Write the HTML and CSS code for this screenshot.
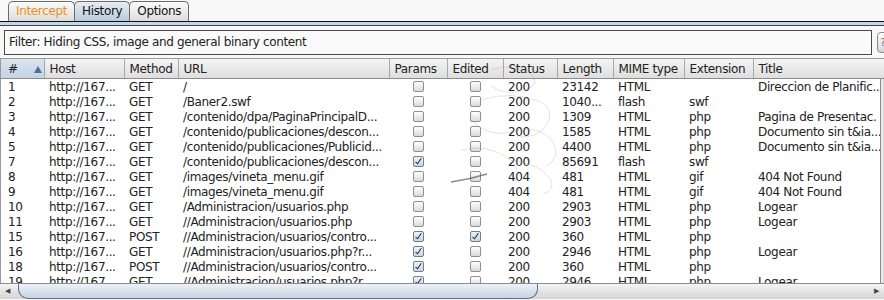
FILE: index.html
```html
<!DOCTYPE html>
<html lang="en">
<head>
  <meta charset="UTF-8">
  <title>Proxy - History</title>
  <link rel="stylesheet" href="styles.css">
</head>
<body>

  <!-- Tabs -->
  <div class="tabs">
    <div class="tab tab-intercept">Intercept</div>
    <div class="tab selected">History</div>
    <div class="tab">Options</div>
  </div>
  <div class="tab-rule"></div>

  <!-- Filter bar -->
  <div class="filter-row">
    <div class="filter-box">Filter: Hiding CSS, image and general binary content</div>
    <div class="help-btn">?</div>
  </div>

  <!-- History table -->
  <div class="table-pane">
    <table class="history">
      <colgroup>
        <col style="width:43px"><col style="width:80px"><col style="width:54px"><col style="width:211px">
        <col style="width:58px"><col style="width:56px"><col style="width:54px"><col style="width:56px">
        <col style="width:71px"><col style="width:69px"><col style="width:131px">
      </colgroup>
      <thead>
        <tr>
          <th class="sorted"># <span class="sort-arrow"></span></th>
          <th>Host</th>
          <th>Method</th>
          <th>URL</th>
          <th>Params</th>
          <th>Edited</th>
          <th>Status</th>
          <th>Length</th>
          <th>MIME type</th>
          <th>Extension</th>
          <th>Title</th>
        </tr>
      </thead>
      <tbody id="rows"></tbody>
    </table>
    <div class="vscroll"></div>

    <svg class="watermark" width="130" height="140" viewBox="0 0 130 140">
      <path d="M40 10 q20 -8 40 4 q10 10 -6 16 q-20 6 -34 -4" />
      <path d="M30 40 q30 -10 60 2 q14 8 6 22 q-10 16 -30 12" />
      <path d="M20 60 q18 18 40 12 q30 -8 42 10 q8 14 -6 24" />
      <path d="M10 90 q24 -6 44 6 q18 10 10 26" />
      <path d="M60 100 q30 4 40 20 q4 10 -8 14" />
      <path d="M-20 124 q30 -2 56 -10" class="dark" />
    </svg>
  </div>

  <!-- Horizontal scrollbar -->
  <div class="hscroll">
    <div class="arrow-btn">&#9664;</div>
    <div class="track">
      <div class="thumb"></div>
    </div>
    <div class="arrow-btn">&#9654;</div>
  </div>

  <script>
    // # method url params edited status length mime ext title
    const history = [
      ['1', 'GET', '/', 0, 0, '200', '23142', 'HTML', '', 'Direccion de Planific..'],
      ['2', 'GET', '/Baner2.swf', 0, 0, '200', '1040...', 'flash', 'swf', ''],
      ['3', 'GET', '/contenido/dpa/PaginaPrincipalD...', 0, 0, '200', '1309', 'HTML', 'php', 'Pagina de Presentac.'],
      ['4', 'GET', '/contenido/publicaciones/descon...', 0, 0, '200', '1585', 'HTML', 'php', 'Documento sin t&ia...'],
      ['5', 'GET', '/contenido/publicaciones/Publicid...', 0, 0, '200', '4400', 'HTML', 'php', 'Documento sin t&ia...'],
      ['7', 'GET', '/contenido/publicaciones/descon...', 1, 0, '200', '85691', 'flash', 'swf', ''],
      ['8', 'GET', '/images/vineta_menu.gif', 0, 0, '404', '481', 'HTML', 'gif', '404 Not Found'],
      ['9', 'GET', '/images/vineta_menu.gif', 0, 0, '404', '481', 'HTML', 'gif', '404 Not Found'],
      ['10', 'GET', '/Administracion/usuarios.php', 0, 0, '200', '2903', 'HTML', 'php', 'Logear'],
      ['11', 'GET', '//Administracion/usuarios.php', 0, 0, '200', '2903', 'HTML', 'php', 'Logear'],
      ['15', 'POST', '//Administracion/usuarios/contro...', 1, 1, '200', '360', 'HTML', 'php', ''],
      ['16', 'GET', '//Administracion/usuarios.php?r...', 1, 0, '200', '2946', 'HTML', 'php', 'Logear'],
      ['18', 'POST', '//Administracion/usuarios/contro...', 1, 0, '200', '360', 'HTML', 'php', ''],
      ['19', 'GET', '//Administracion/usuarios.php?r...', 1, 0, '200', '2946', 'HTML', 'php', 'Logear']
    ];

    function checkbox(on) {
      const box = document.createElement('span');
      box.className = on ? 'cb on' : 'cb';
      return box;
    }

    const body = document.getElementById('rows');
    history.forEach(function (r) {
      const tr = document.createElement('tr');
      const cells = [r[0], 'http://167...', r[1], r[2], null, null, r[5], r[6], r[7], r[8], r[9]];
      cells.forEach(function (text, i) {
        const td = document.createElement('td');
        if (i === 4 || i === 5) {
          td.className = 'center';
          td.appendChild(checkbox(r[i - 1]));
        } else {
          td.textContent = text;
        }
        tr.appendChild(td);
      });
      body.appendChild(tr);
    });
  </script>
</body>
</html>
```

FILE: styles.css
```css
body {
  margin: 0;
  padding: 0;
  background-color: #f8f8f8;
  font-family: 'DejaVu Sans', sans-serif;
  font-size: 12px;
  letter-spacing: -0.35px;
  color: #222;
  width: 884px;
  height: 300px;
  overflow: hidden;
}
.tabs {
  display: flex;
  padding-left: 8px;
  height: 21px;
  align-items: flex-end;
}
.tab {
  height: 19px;
  padding: 0 7px;
  line-height: 19px;
  border: 1px solid #6b6b6b;
  border-bottom: none;
  border-radius: 5px 5px 0 0;
  background: linear-gradient(#fbfbfb, #dcdcdc);
  color: #111;
  margin-right: -1px;
}
.tab-intercept {
  color: #e8901c;
}
.tab.selected {
  background: linear-gradient(#e6edf4, #b9cbdc);
}
.tab-rule {
  height: 3px;
  border-top: 1px solid #111;
  border-bottom: 1px solid #3b4654;
  background-color: #c3d5e8;
}
.filter-row {
  display: flex;
  align-items: center;
  gap: 5px;
  padding: 3px 0 0 4px;
  height: 26px;
}
.filter-box {
  width: 862px;
  height: 23px;
  line-height: 23px;
  padding-left: 4px;
  border: 1px solid #4a4a4a;
  background-color: #fafafa;
  flex-shrink: 0;
}
.help-btn {
  width: 16px;
  height: 19px;
  border: 1px solid #8a8a8a;
  border-radius: 4px;
  background: linear-gradient(#ffffff, #d6d6d6);
  color: #777;
  font-size: 11px;
  line-height: 19px;
  padding-left: 2px;
  flex-shrink: 0;
}
.table-pane {
  position: relative;
  margin-top: 3px;
  height: 224px;
  border-top: 1px solid #9a9a9a;
  border-left: 1px solid #9a9a9a;
  background-color: #ffffff;
  overflow: hidden;
}
.history {
  border-collapse: collapse;
  table-layout: fixed;
  width: 883px;
}
.history th {
  height: 19px;
  padding: 0 0 0 5px;
  font-weight: normal;
  text-align: left;
  background: linear-gradient(#f4f4f4, #dedede);
  border-right: 1px solid #a8a8a8;
  border-bottom: 1px solid #8c8c8c;
  white-space: nowrap;
  overflow: hidden;
}
.history th.sorted {
  padding-left: 7px;
  background: linear-gradient(#dae5ef, #c4d4e3);
}
.sort-arrow {
  display: inline-block;
  margin-left: 13px;
  width: 0;
  height: 0;
  border-left: 4px solid transparent;
  border-right: 4px solid transparent;
  border-bottom: 7px solid #4d6f94;
}
.history td {
  height: 15px;
  padding: 0 0 0 5px;
  white-space: nowrap;
  overflow: hidden;
  line-height: 15px;
}
.history tbody tr:first-child td {
  padding-top: 1px;
}
.history td:first-child {
  padding-left: 7px;
}
.history td.center {
  text-align: center;
  padding-left: 0;
}
.cb {
  display: inline-block;
  position: relative;
  width: 9px;
  height: 9px;
  border: 1px solid #8f8f8f;
  border-radius: 2px;
  background: linear-gradient(#ffffff, #dadada);
  vertical-align: -1px;
}
.cb.on {
  background: linear-gradient(#eef3f8, #c9d6e3);
  border-color: #6e7f90;
}
.cb.on::after {
  content: '';
  position: absolute;
  left: 3px;
  top: 0;
  width: 2px;
  height: 6px;
  border-right: 1px solid #1f2a36;
  border-bottom: 1px solid #1f2a36;
  transform: rotate(35deg);
}
.vscroll {
  position: absolute;
  right: 0;
  top: 20px;
  bottom: 0;
  width: 3px;
  border-left: 1px solid #8a8a8a;
  background: linear-gradient(90deg, #f2f2f2, #d8d8d8);
}
.watermark {
  position: absolute;
  left: 450px;
  top: 1px;
  pointer-events: none;
}
.watermark path {
  fill: none;
  stroke: #9a9a9a;
  stroke-width: 0.8;
  opacity: 0.35;
}
.watermark path.dark {
  stroke: #555;
  stroke-width: 1.4;
  opacity: 0.7;
}
.hscroll {
  display: flex;
  height: 15px;
  border-top: 1px solid #8c8c8c;
  background: linear-gradient(#f4f4f4, #d4d4d4);
}
.arrow-btn {
  width: 15px;
  font-size: 7px;
  line-height: 15px;
  text-align: center;
  color: #444;
}
.track {
  flex: 1;
  padding-left: 3px;
}
.thumb {
  width: 518px;
  height: 14px;
  border: 1px solid #5d6f82;
  border-top: none;
  border-radius: 0 0 10px 10px;
  background: linear-gradient(#edf2f7, #c6d4e2);
}
```
